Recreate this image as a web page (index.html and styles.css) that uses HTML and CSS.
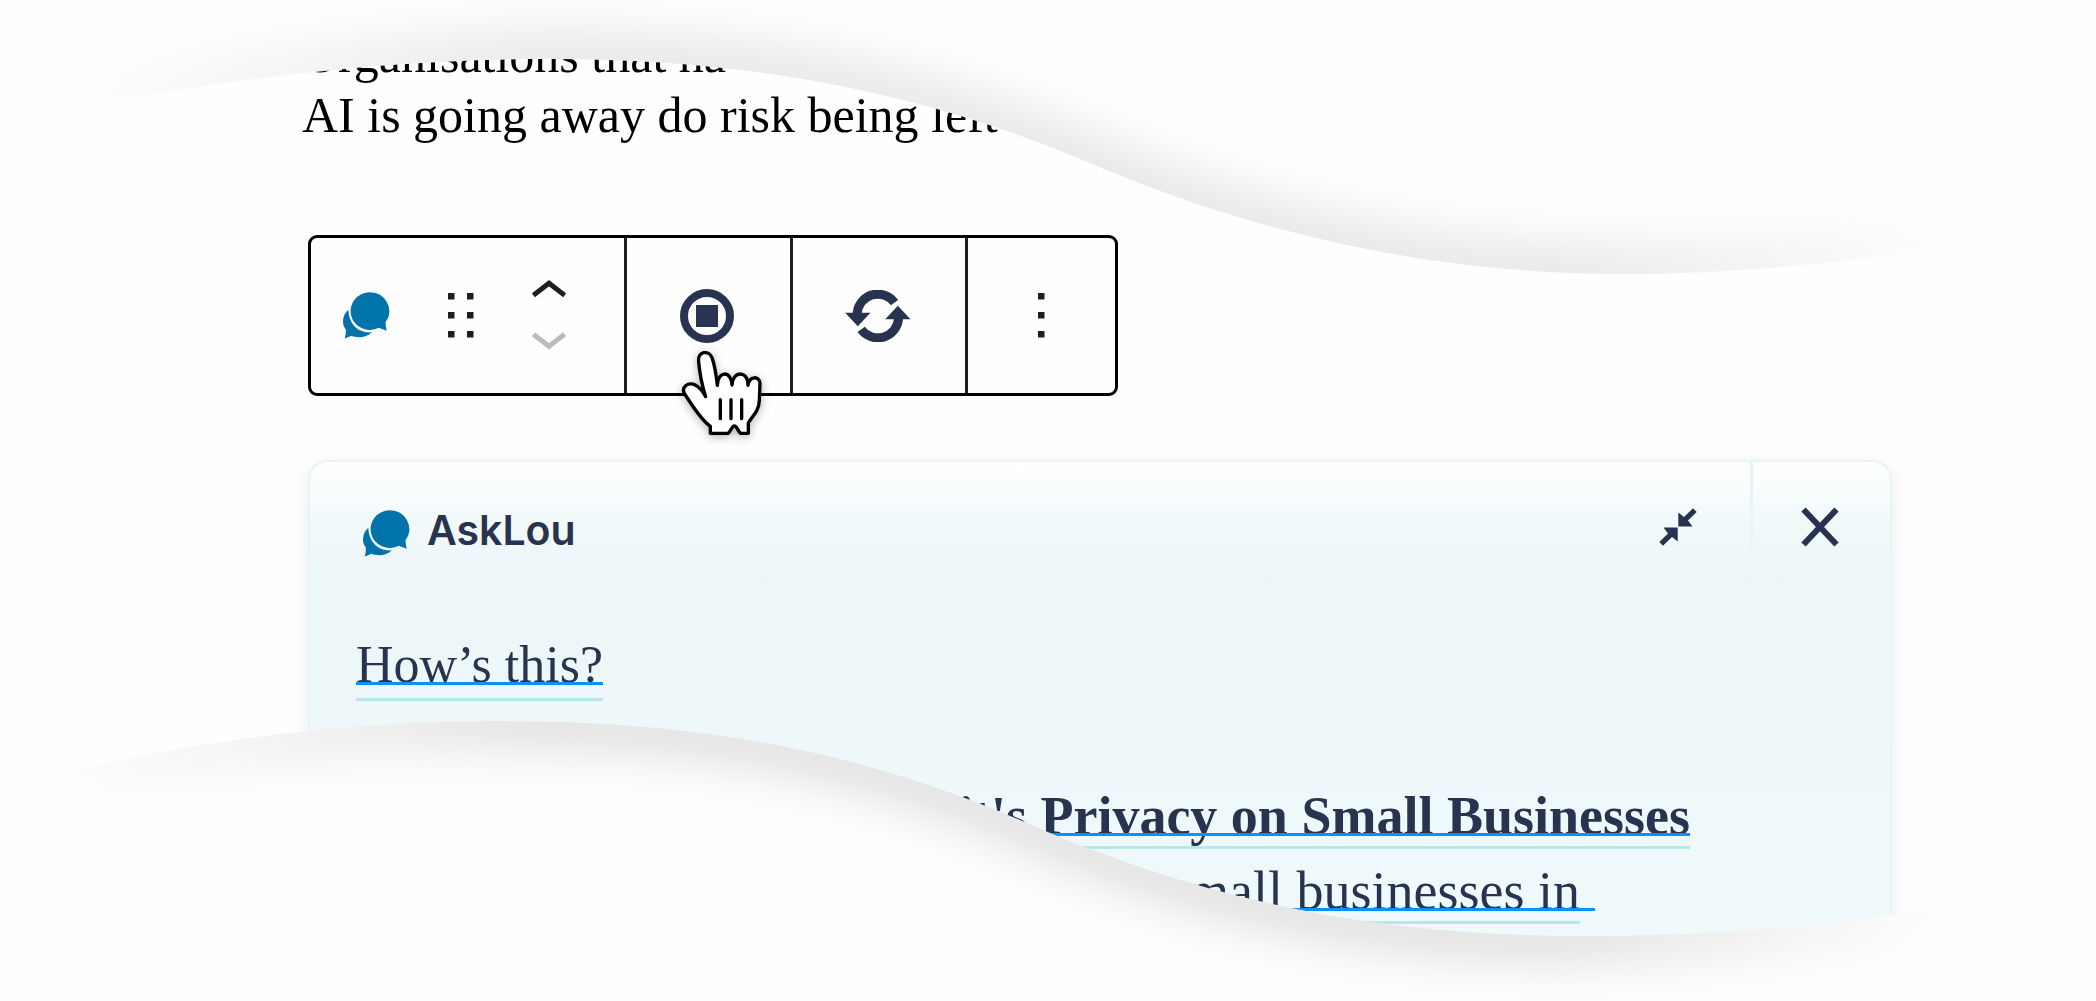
FILE: index.html
```
<!DOCTYPE html>
<html lang="en">
<head>
    <meta charset="UTF-8">
    <meta name="viewport" content="width=device-width, initial-scale=1.0">
    <title>AskLou</title>
    <link rel="stylesheet" href="styles.css">
</head>
<body>
    <!-- shared shapes -->
    <svg class="defs" width="0" height="0" aria-hidden="true">
        <symbol id="chat" viewBox="0 0 47 47">
            <path d="M5.3 17.8C-1 23.500-1.500 32.500 2.800 37.500C3 41 2.500 44 1.800 46.500L8.500 43.800C15 46.500 24 45.500 28.800 40.300C16 41.500 6 33 5.300 17.800z"/>
            <path d="M26.700 0.300A19.200 18.800 0 0 1 42.600 30C42.400 33 42.900 36 43.800 38.800L35.800 35.700A19.200 18.800 0 1 1 26.700 0.300z"/>
        </symbol>
    </svg>

    <main class="page">
        <p class="intro">Organisations that ha<br>AI is going away do risk being left</p>

        <div class="toolbar" role="toolbar" aria-label="Block tools">
            <div class="group group-block">
                <svg class="chat-icon" aria-hidden="true"><use href="#chat"/></svg>
                <button type="button" class="icon-button" aria-label="Drag">
                    <svg width="26" height="45" viewBox="0 0 26 45" fill="#1e1e1e">
                        <path d="M0 0h6.500v6.500H0zM19 0h6.500v6.500H19zM0 19h6.500v6.500H0zM19 19h6.500v6.500H19zM0 38h6.500v6.500H0zM19 38h6.500v6.500H19z"/>
                    </svg>
                </button>
                <div class="movers">
                    <button type="button" class="icon-button" aria-label="Move up">
                        <svg width="34" height="18" viewBox="0 0 34 18" fill="none" stroke="#1e1e1e" stroke-width="5">
                            <path d="M1.300 15.300L17 3.200L32.700 15.300"/>
                        </svg>
                    </button>
                    <button type="button" class="icon-button" aria-label="Move down" disabled>
                        <svg width="34" height="18" viewBox="0 0 34 18" fill="none" stroke="#bbb" stroke-width="5">
                            <path d="M1.300 2.200L17 14.300L32.700 2.200"/>
                        </svg>
                    </button>
                </div>
            </div>
            <button type="button" class="group group-stop" aria-label="Stop">
                <svg width="54" height="54" viewBox="0 0 54 54">
                    <circle cx="27" cy="27" r="23" fill="none" stroke="#28344f" stroke-width="8"/>
                    <path d="M16 16h22v22H16z" fill="#28344f"/>
                </svg>
                <svg class="pointer" width="84" height="88" viewBox="120 388 252 264" aria-hidden="true">
                    <path d="M197 531C189 515 178 502 164 495C144 487 122 502 134 523C156 555 180 598 211 620L211 641L264 641C274 634 275 619 283 619C291 619 293 634 302 641L325 641L325 610C338 588 357 575 358 542L360 490C358 468 328 468 324 497C326 452 278 452 276 496C274 452 234 452 232 497C229 470 224 436 216 414C207 391 172 393 176 427C179 462 187 500 197 531z" fill="#fff" stroke="#000" stroke-width="10" stroke-linejoin="round"/>
                    <path d="M241 540V597M273 540V597M305 540V597" stroke="#000" stroke-width="10" stroke-linecap="round"/>
                </svg>
            </button>
            <button type="button" class="group group-refresh" aria-label="Regenerate">
                <svg width="66" height="52" viewBox="0 0 197 156" fill="#28344f">
                    <path d="M36 70A62 62 0 0 1 148 38M160 86A62 62 0 0 1 48 118" fill="none" stroke="#28344f" stroke-width="27"/>
                    <path d="M0 68H76L38 109zM196 88H120L158 47z"/>
                </svg>
            </button>
            <button type="button" class="group group-more" aria-label="Options">
                <svg width="7" height="45" viewBox="0 0 7 45" fill="#1e1e1e">
                    <path d="M0 0h6.500v6.500H0zM0 19h6.500v6.500H0zM0 38h6.500v6.500H0z"/>
                </svg>
            </button>
        </div>

        <section class="panel">
            <header class="panel-header">
                <div class="brand">
                    <svg class="chat-icon" aria-hidden="true"><use href="#chat"/></svg>
                    <h1>AskLou</h1>
                </div>
                <button type="button" class="panel-button" aria-label="Collapse">
                    <svg width="38" height="38" viewBox="0 0 38 38" fill="#28344f">
                        <path d="M19.300 4.500L25 9L34 0.300L37.700 4L29 12.500L33.500 18.500H19.300z"/>
                        <path d="M18.700 33.500L13 29L4 37.700L0.300 34L9 25.500L4.500 19.500H18.700z"/>
                    </svg>
                </button>
                <button type="button" class="panel-button panel-close" aria-label="Close">
                    <svg width="38" height="40" viewBox="0 0 38 40" fill="none" stroke="#28344f" stroke-width="6">
                        <path d="M2.500 2.500L35.500 37.500M35.500 2.500L2.500 37.500"/>
                    </svg>
                </button>
            </header>
            <p class="marked prompt">How’s this?</p>
            <div class="answer">
                <strong class="marked">it's Privacy on Small Businesses</strong>
                <span class="marked marked-last">small businesses in</span>
            </div>
        </section>

        <!-- torn edges over the top and bottom of the content -->
        <svg class="wave wave-top" viewBox="0 0 2096 300" aria-hidden="true">
            <defs>
                <path id="top-edge" d="M-100 160C-40 138 20 122 80 108C230 78 390 59 550 59C760 59 930 95 1090 163C1260 236 1440 274 1620 274C1740 274 1850 262 1960 246C2020 236 2100 220 2200 200"/>
                <clipPath id="top-clip">
                    <path d="M-100 160C-40 138 20 122 80 108C230 78 390 59 550 59C760 59 930 95 1090 163C1260 236 1440 274 1620 274C1740 274 1850 262 1960 246C2020 236 2100 220 2200 200V-100H-100z"/>
                </clipPath>
                <linearGradient id="top-fade" gradientUnits="userSpaceOnUse" x1="70" y1="0" x2="1950" y2="0">
                    <stop offset="0" stop-color="#000" stop-opacity="0"/>
                    <stop offset="0.250" stop-color="#000" stop-opacity="0.130"/>
                    <stop offset="0.800" stop-color="#000" stop-opacity="0.130"/>
                    <stop offset="1" stop-color="#000" stop-opacity="0"/>
                </linearGradient>
                <filter id="soft" filterUnits="userSpaceOnUse" x="-200" y="-200" width="2500" height="1400" color-interpolation-filters="sRGB">
                    <feGaussianBlur stdDeviation="26"/>
                </filter>
            </defs>
            <g clip-path="url(#top-clip)">
                <path d="M0 0H2096V300H0z" fill="#fefefe"/>
                <use href="#top-edge" fill="none" stroke="url(#top-fade)" stroke-width="40" filter="url(#soft)"/>
            </g>
        </svg>
        <svg class="wave wave-bottom" viewBox="0 700 2096 301" aria-hidden="true">
            <defs>
                <path id="bottom-edge" d="M0 788C160 745 330 721 495 721C700 721 855 750 1020 820C1190 895 1360 936 1583 936C1760 936 1940 915 2096 877"/>
                <clipPath id="bottom-clip">
                    <path d="M0 788C160 745 330 721 495 721C700 721 855 750 1020 820C1190 895 1360 936 1583 936C1760 936 1940 915 2096 877V1100H0z"/>
                </clipPath>
                <linearGradient id="bottom-fade" gradientUnits="userSpaceOnUse" x1="50" y1="0" x2="1950" y2="0">
                    <stop offset="0" stop-color="#000" stop-opacity="0"/>
                    <stop offset="0.250" stop-color="#000" stop-opacity="0.160"/>
                    <stop offset="0.800" stop-color="#000" stop-opacity="0.160"/>
                    <stop offset="1" stop-color="#000" stop-opacity="0"/>
                </linearGradient>
            </defs>
            <g clip-path="url(#bottom-clip)">
                <path d="M0 700H2096V1001H0z" fill="#fefefe"/>
                <use href="#bottom-edge" fill="none" stroke="url(#bottom-fade)" stroke-width="40" filter="url(#soft)"/>
            </g>
        </svg>
    </main>
</body>
</html>
```

FILE: styles.css
```
* {
    box-sizing: border-box;
}

body {
    margin: 0;
    background-color: #fefefe;
    font-family: "Liberation Serif", serif;
    color: #000;
}

button {
    margin: 0;
    padding: 0;
    border: none;
    background: none;
    cursor: pointer;
}

svg {
    display: block;
}

.defs {
    position: absolute;
}

.page {
    position: relative;
    height: 100vh;
    overflow: hidden;
    padding: 25px 204px 0 308px;
}

.intro {
    margin: 0 0 90px -6px;
    font-size: 50px;
    line-height: 60px;
}

/* toolbar */
.toolbar {
    display: flex;
    width: fit-content;
    height: 161px;
    border: 3px solid #000;
    border-radius: 9px;
    background-color: #fefefe;
}

.group {
    display: flex;
    align-items: center;
    justify-content: center;
    border-right: 3px solid #1e1e1e;
}

.group:last-child {
    border-right: none;
}

.group-block {
    justify-content: space-between;
    width: 316px;
    padding: 0 58px 0 32px;
}

.group-stop {
    position: relative;
    width: 166px;
    padding-right: 4px;
}

.group-refresh {
    width: 175px;
    padding-right: 2px;
}

.group-more {
    width: 147px;
}

.chat-icon {
    width: 47px;
    height: 47px;
    fill: #0073aa;
}

.movers {
    display: flex;
    flex-direction: column;
    gap: 34px;
    padding-bottom: 2px;
}

.pointer {
    position: absolute;
    top: 111px;
    left: 53px;
    overflow: visible;
    filter: drop-shadow(0 2px 5px rgba(0, 0, 0, 0.3));
}

/* chat panel */
.panel {
    height: 600px;
    margin-top: 64px;
    border: 2px solid #e8f5f8;
    border-radius: 20px;
    background: linear-gradient(#fff 0, #f3fafb 50px, #ecf5f8 110px, #edf7f9 200px, #f0f9fb 500px);
    box-shadow: 0 4px 20px rgba(0, 0, 0, 0.07);
    color: #28344f;
}

.panel-header {
    display: flex;
    height: 130px;
}

.brand {
    display: flex;
    align-items: center;
    gap: 17px;
    flex: 1;
    padding: 12px 0 0 53px;
}

.brand h1 {
    margin: 0;
    padding-bottom: 6px;
    font-family: Inter, sans-serif;
    font-size: 41px;
    font-weight: 600;
    line-height: 52px;
}

.panel-button {
    display: flex;
    align-items: center;
    justify-content: center;
    width: 140px;
    padding-right: 4px;
}

.panel-close {
    border-left: 3px solid;
    border-image: linear-gradient(#e5f4f7, #ecf5f8 80%) 1;
}

/* lines with the two coloured rules */
.marked {
    position: relative;
    width: fit-content;
    border-bottom: 3px solid #b5e8ea;
    font-size: 54px;
    line-height: 60px;
    white-space: nowrap;
}

.marked::after {
    content: "";
    position: absolute;
    right: 0;
    bottom: 10px;
    left: 0;
    height: 3px;
    background-color: #0693fe;
}

.prompt {
    margin: 43px 0 0 46px;
    padding-bottom: 3px;
    font-size: 52px;
}

.prompt::after {
    bottom: 13px;
}

.answer {
    display: flex;
    flex-direction: column;
    align-items: flex-end;
    gap: 12px;
    margin-top: 85px;
    padding-right: 200px;
}

.marked-last {
    margin-right: 110px;
}

.marked-last::after {
    right: -15px;
}

/* waves */
.wave {
    position: absolute;
    left: 0;
    width: 100%;
    pointer-events: none;
}

.wave-top {
    top: 0;
}

.wave-bottom {
    bottom: 0;
}
```
